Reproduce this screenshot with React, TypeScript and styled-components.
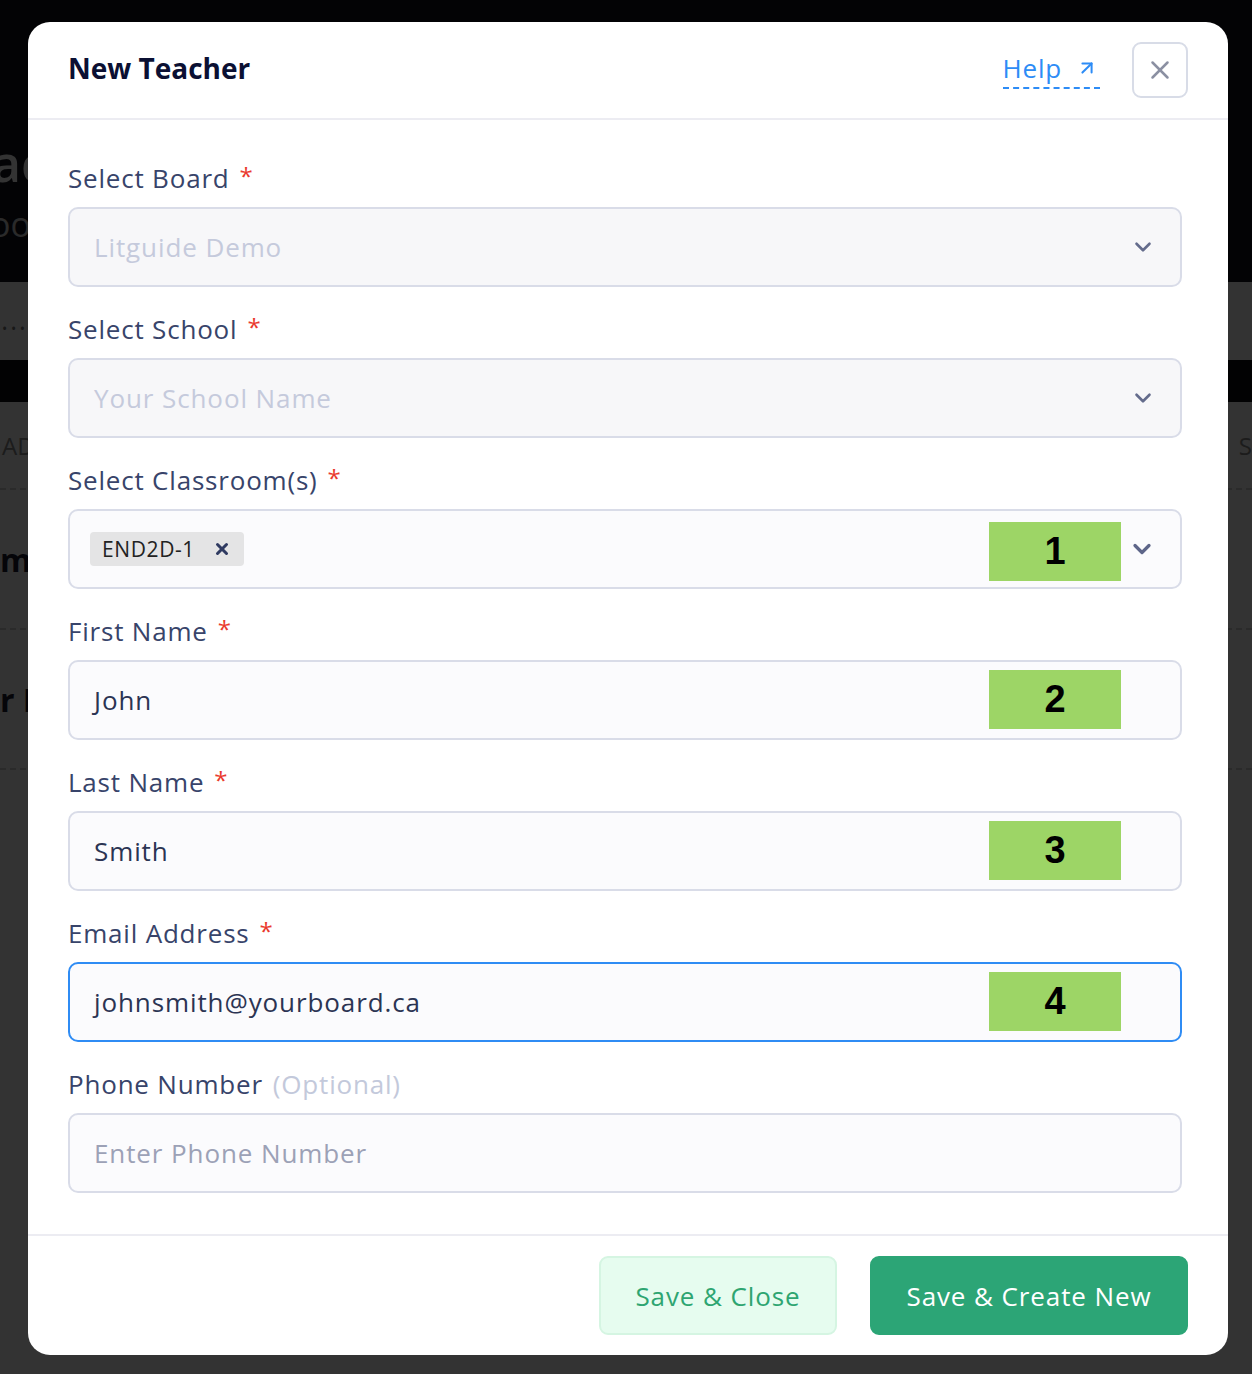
import React from "react";
import styled, { createGlobalStyle } from "styled-components";
import { ArrowUpRight, ChevronDown, X } from "lucide-react";

const GlobalStyle = createGlobalStyle`
  html, body {
    margin: 0;
    padding: 0;
    background: #ffffff;
  }
  body {
    font-family: "Open Sans", "Noto Sans", sans-serif;
  }
  * { box-sizing: border-box; }
`;

const Page = styled.div`
  position: relative;
  width: 1252px;
  height: 1374px;
  overflow: hidden;
  display: flex;
  flex-direction: column;
  background: #ffffff;
`;

const Hero = styled.header`
  height: 282px;
  background: #12121c;
  padding: 136px 0 0 0;
  display: flex;
  flex-direction: column;
  gap: 14px;
`;

const HeroTitle = styled.h1`
  margin: 0 0 0 -8px;
  font-size: 50px;
  font-weight: 600;
  color: #ffffff;
  line-height: 54px;
`;

const HeroSub = styled.p`
  margin: 0 0 0 -10px;
  font-size: 34px;
  color: #cfcfcf;
  line-height: 40px;
`;

const Crumbs = styled.div`
  height: 78px;
  background: #ffffff;
  display: flex;
  align-items: center;
  padding: 14px 0 0 2px;
  font-size: 14px;
  color: #777;
`;

const DarkBar = styled.div`
  height: 42px;
  background: #0a0a12;
`;

const Table = styled.div`
  flex: 1;
  display: flex;
  flex-direction: column;
`;

const TableHead = styled.div`
  height: 88px;
  display: flex;
  align-items: center;
  justify-content: space-between;
  padding: 0 0 0 2px;
  font-size: 24px;
  color: #8a8a8a;
  border-bottom: 2px dashed #d0d0d0;
`;

const TableRow = styled.div`
  height: 140px;
  display: flex;
  align-items: center;
  font-size: 32px;
  font-weight: 700;
  color: #1a1a30;
  border-bottom: 2px dashed #d0d0d0;
`;

const Backdrop = styled.div`
  position: absolute;
  inset: 0;
  background: rgba(0, 0, 0, 0.8);
`;

const Modal = styled.div`
  position: absolute;
  left: 28px;
  top: 22px;
  width: 1200px;
  height: 1333px;
  background: #ffffff;
  border-radius: 22px;
  display: flex;
  flex-direction: column;
  overflow: hidden;
`;

const ModalHeader = styled.div`
  height: 96px;
  flex-shrink: 0;
  display: flex;
  align-items: center;
  padding: 0 40px;
  border-bottom: 2px solid #ececf2;
  box-sizing: content-box;
`;

const Title = styled.h2`
  margin: -4px 0 0 0;
  flex: 1;
  font-size: 28px;
  font-weight: 700;
  color: #0b1033;
`;

const HelpLink = styled.a`
  display: inline-flex;
  align-items: center;
  gap: 14px;
  font-size: 26px;
  letter-spacing: 0.8px;
  color: #2d8cf6;
  text-decoration: none;
  padding: 0 2px 4px 0;
  border-bottom: 2px dashed #2d8cf6;
  margin-right: 32px;
  margin-top: 2px;
  line-height: 30px;
`;

const CloseButton = styled.button`
  width: 56px;
  height: 56px;
  border: 2px solid #d8dce7;
  border-radius: 9px;
  background: #ffffff;
  display: flex;
  align-items: center;
  justify-content: center;
  color: #8b90a2;
  padding: 0;
  cursor: pointer;
`;

const Body = styled.div`
  flex: 1;
  padding: 43px 46px 0 40px;
  display: flex;
  flex-direction: column;
  gap: 27px;
  border-bottom: 2px solid #ececf2;
`;

const Field = styled.div`
  display: flex;
  flex-direction: column;
  gap: 14px;
`;

const Label = styled.label`
  display: flex;
  align-items: center;
  gap: 10px;
  height: 30px;
  font-size: 26px;
  color: #38446a;
  letter-spacing: 0.8px;
`;

const Required = styled.span`
  color: #ea3a2e;
  font-size: 24px;
  margin-top: -6px;
`;

const Optional = styled.span`
  color: #c3c9db;
`;

const Control = styled.div<{ $disabled?: boolean; $focused?: boolean }>`
  position: relative;
  height: 80px;
  border-radius: 10px;
  border: 2px solid ${({ $focused }) => ($focused ? "#2f8cf4" : "#d9dce8")};
  background: ${({ $disabled }) => ($disabled ? "#f7f7f9" : "#fbfbfd")};
  display: flex;
  align-items: center;
  padding: 0 24px;
  gap: 12px;
`;

const Value = styled.span<{ $tone?: "value" | "muted" | "placeholder" }>`
  flex: 1;
  font-size: 26px;
  color: ${({ $tone }) =>
    $tone === "muted" ? "#c5cadc" : $tone === "placeholder" ? "#9ca1b6" : "#2b3453"};
  letter-spacing: 0.9px;
`;

const Chevron = styled.span<{ $dark?: boolean }>`
  display: flex;
  color: ${({ $dark }) => ($dark ? "#5e6689" : "#646c8c")};
`;

const TagList = styled.div`
  flex: 1;
  display: flex;
  align-items: center;
  margin-left: -4px;
`;

const Tag = styled.span`
  display: inline-flex;
  align-items: center;
  gap: 18px;
  height: 34px;
  padding: 0 13px 0 12px;
  background: #e4e4e5;
  border-radius: 4px;
  font-size: 21px;
  letter-spacing: 0.6px;
  color: #222222;
`;

const TagRemove = styled.span`
  display: flex;
  color: #2f3a61;
`;

const Marker = styled.span<{ $top: number }>`
  position: absolute;
  left: 919px;
  top: ${({ $top }) => $top}px;
  width: 132px;
  height: 59px;
  background: #9dd566;
  display: flex;
  align-items: center;
  justify-content: center;
  font-family: "Liberation Sans", Arial, sans-serif;
  font-weight: 700;
  font-size: 38px;
  color: #000000;
`;

const Footer = styled.div`
  height: 119px;
  flex-shrink: 0;
  display: flex;
  align-items: center;
  justify-content: flex-end;
  gap: 33px;
  padding: 0 40px 0 0;
`;

const FooterButton = styled.button<{ $variant: "soft" | "solid" }>`
  height: 79px;
  padding: 0;
  border-radius: 9px;
  font-family: inherit;
  font-size: 26px;
  font-weight: 500;
  letter-spacing: 0.9px;
  cursor: pointer;
  border: 2px solid ${({ $variant }) => ($variant === "soft" ? "#d5f5e2" : "#2ca576")};
  background: ${({ $variant }) => ($variant === "soft" ? "#e6fcef" : "#2ca576")};
  color: ${({ $variant }) => ($variant === "soft" ? "#2ea571" : "#ffffff")};
  width: ${({ $variant }) => ($variant === "soft" ? "238px" : "318px")};
`;

const Req = () => <Required>*</Required>;

export default function App() {
  return (
    <>
      <GlobalStyle />
      <Page>
        <Hero>
          <HeroTitle>acher Management</HeroTitle>
          <HeroSub>ools and classrooms</HeroSub>
        </Hero>
        <Crumbs>• • •</Crumbs>
        <DarkBar />
        <Table>
          <TableHead>
            <span>ADD</span>
            <span>S</span>
          </TableHead>
          <TableRow>min</TableRow>
          <TableRow>r Name</TableRow>
        </Table>
        <Backdrop />

        <Modal>
          <ModalHeader>
            <Title>New Teacher</Title>
            <HelpLink href="#">
              Help
              <ArrowUpRight size={22} strokeWidth={2.2} />
            </HelpLink>
            <CloseButton aria-label="Close">
              <X size={30} strokeWidth={2} />
            </CloseButton>
          </ModalHeader>

          <Body>
            <Field>
              <Label>
                Select Board <Req />
              </Label>
              <Control $disabled>
                <Value $tone="muted">Litguide Demo</Value>
                <Chevron>
                  <ChevronDown size={26} strokeWidth={2.4} />
                </Chevron>
              </Control>
            </Field>

            <Field>
              <Label>
                Select School <Req />
              </Label>
              <Control $disabled>
                <Value $tone="muted">Your School Name</Value>
                <Chevron>
                  <ChevronDown size={26} strokeWidth={2.4} />
                </Chevron>
              </Control>
            </Field>

            <Field>
              <Label>
                Select Classroom(s) <Req />
              </Label>
              <Control>
                <TagList>
                  <Tag>
                    END2D-1
                    <TagRemove>
                      <X size={18} strokeWidth={4} />
                    </TagRemove>
                  </Tag>
                </TagList>
                <Chevron $dark>
                  <ChevronDown size={28} strokeWidth={2.8} />
                </Chevron>
                <Marker $top={11}>1</Marker>
              </Control>
            </Field>

            <Field>
              <Label>
                First Name <Req />
              </Label>
              <Control>
                <Value>John</Value>
                <Marker $top={8}>2</Marker>
              </Control>
            </Field>

            <Field>
              <Label>
                Last Name <Req />
              </Label>
              <Control>
                <Value>Smith</Value>
                <Marker $top={8}>3</Marker>
              </Control>
            </Field>

            <Field>
              <Label>
                Email Address <Req />
              </Label>
              <Control $focused>
                <Value>johnsmith@yourboard.ca</Value>
                <Marker $top={8}>4</Marker>
              </Control>
            </Field>

            <Field>
              <Label>
                Phone Number <Optional>(Optional)</Optional>
              </Label>
              <Control>
                <Value $tone="placeholder">Enter Phone Number</Value>
              </Control>
            </Field>
          </Body>

          <Footer>
            <FooterButton $variant="soft">Save &amp; Close</FooterButton>
            <FooterButton $variant="solid">Save &amp; Create New</FooterButton>
          </Footer>
        </Modal>
      </Page>
    </>
  );
}
